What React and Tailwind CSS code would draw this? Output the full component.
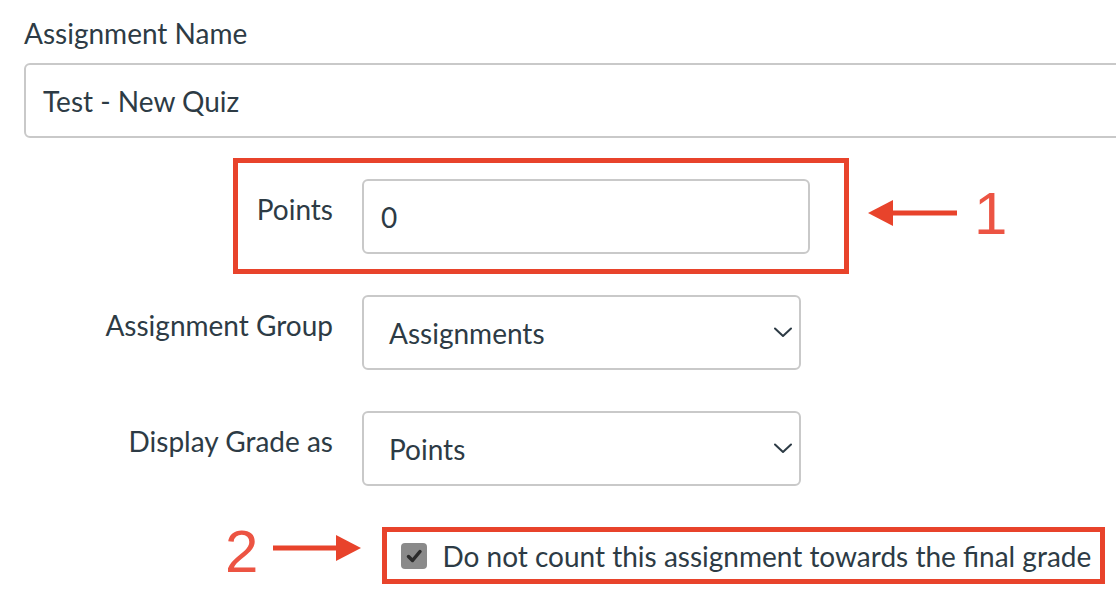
import React from 'react';

const Chevron = () => (
    <svg width="18" height="11" viewBox="0 0 18 11" fill="none">
        <path d="M1 1.5 L9 9 L17 1.5" stroke="#2D3B45" strokeWidth="2" strokeLinecap="round" strokeLinejoin="round" />
    </svg>
);

const Arrow = ({ dir = 'left', width = 89 }) => (
    <svg width={width} height="26" viewBox={`0 0 ${width} 26`}>
        {dir === 'left' ? (
            <>
                <polygon points="0,13 25,0 25,26" fill="#E8432B" />
                <rect x="22" y="10.5" width={width - 22} height="5" fill="#E8432B" />
            </>
        ) : (
            <>
                <rect x="0" y="10.5" width={width - 22} height="5" fill="#E8432B" />
                <polygon points={`${width},13 ${width - 25},0 ${width - 25},26`} fill="#E8432B" />
            </>
        )}
    </svg>
);

const SelectBox = ({ value }) => (
    <div className="ml-[29px] w-[439px] h-[75px] border-2 border-[#C9C9C9] rounded-[6px] flex items-center justify-between pl-[25px] pr-[7px] text-[28px] text-[#2D3B45]">
        <span>{value}</span>
        <Chevron />
    </div>
);

export default function App() {
    return (
        <div
            className="w-[1116px] h-[592px] overflow-hidden bg-white text-[#2D3B45]"
            style={{ fontFamily: 'Lato, "Open Sans", sans-serif' }}
        >
            <div className="pl-[24px] pt-[19px]">
                <div className="text-[28px] leading-none">Assignment Name</div>
                <div className="mt-[16px] w-[1120px] h-[75px] border-2 border-[#C9C9C9] rounded-[6px] flex items-center pl-[17px] text-[28px]">
                    Test - New Quiz
                </div>

                {/* points, boxed */}
                <div className="mt-[20px] flex items-center">
                    <div className="ml-[209px] w-[616px] h-[116px] border-[5px] border-[#E8432B] flex items-start pt-[16px]">
                        <div className="w-[95px] text-right text-[28px] leading-none pt-[16px]">Points</div>
                        <div className="ml-[29px] w-[448px] h-[75px] border-2 border-[#C9C9C9] rounded-[6px] flex items-center pl-[17px] text-[28px]">
                            0
                        </div>
                    </div>
                    <div className="ml-[19px] -mt-[6px]">
                        <Arrow dir="left" width={89} />
                    </div>
                    <div className="ml-[17px] text-[60px] leading-none text-[#EC5443] -mt-[4px]" style={{ fontFamily: '"Liberation Sans", Arial, sans-serif' }}>
                        1
                    </div>
                </div>

                <div className="mt-[21px] flex items-start">
                    <div className="w-[309px] text-right text-[28px] leading-none pt-[16px]">Assignment Group</div>
                    <SelectBox value="Assignments" />
                </div>

                <div className="mt-[41px] flex items-start">
                    <div className="w-[309px] text-right text-[28px] leading-none pt-[16px]">Display Grade as</div>
                    <SelectBox value="Points" />
                </div>

                {/* checkbox, boxed */}
                <div className="mt-[41px] flex items-center">
                    <div className="ml-[201px] text-[60px] leading-none text-[#EC5443] -mt-[8px]" style={{ fontFamily: '"Liberation Sans", Arial, sans-serif' }}>
                        2
                    </div>
                    <div className="ml-[15px] -mt-[16px]">
                        <Arrow dir="right" width={88} />
                    </div>
                    <div className="ml-[21px] w-[723px] h-[57px] border-[5px] border-[#E8432B] flex items-center pl-[14px]">
                        <div className="w-[26px] h-[26px] rounded-[4px] bg-[#8A8A8A] flex items-center justify-center">
                            <svg width="26" height="26" viewBox="0 0 26 26">
                                <path d="M7.5 13.5 L11.5 17.5 L19 8.5" stroke="#2B2B2B" strokeWidth="3.5" fill="none" strokeLinecap="round" strokeLinejoin="round" />
                            </svg>
                        </div>
                        <span className="ml-[15px] text-[28px] leading-none">Do not count this assignment towards the final grade</span>
                    </div>
                </div>
            </div>
        </div>
    );
}
